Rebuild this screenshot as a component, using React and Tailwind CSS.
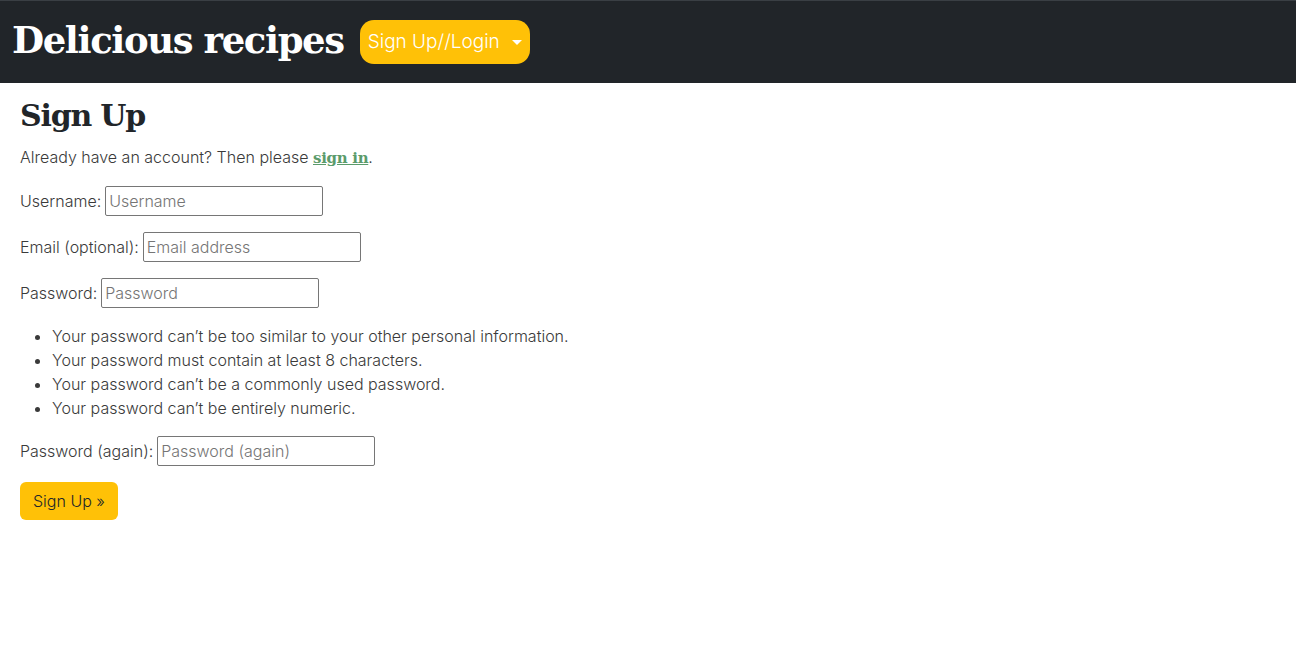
import React from 'react';

const fields = [
    { label: 'Username:', placeholder: 'Username', type: 'text' },
    { label: 'Email (optional):', placeholder: 'Email address', type: 'email' },
    { label: 'Password:', placeholder: 'Password', type: 'password' },
];

const rules = [
    'Your password can’t be too similar to your other personal information.',
    'Your password must contain at least 8 characters.',
    'Your password can’t be a commonly used password.',
    'Your password can’t be entirely numeric.',
];

const Field = ({ label, placeholder, type }) => (
    <p className="flex items-center gap-1 h-[30px]">
        <label>{label}</label>
        <input
            type={type}
            placeholder={placeholder}
            className="w-[218px] h-[30px] border border-[#767676] rounded-[2px] px-[3px] text-[16px] font-light placeholder:text-[#757575] outline-none"
        />
    </p>
);

const App = () => {
    return (
        <div className="min-h-screen bg-white text-[#3a3a3a] font-['Inter',sans-serif] font-light text-[16px]">
            <nav className="h-[83px] bg-[#212529] border-t border-[#3a3f44] flex items-center px-3 gap-4">
                <a className="text-white font-['DejaVu_Serif',serif] font-bold text-[37px] tracking-[-1.4px] leading-none -mt-1">
                    Delicious recipes
                </a>
                <button className="h-11 pl-2 pr-2 rounded-[14px] bg-[#ffc107] text-white text-[19px] font-light font-['Inter',sans-serif] flex items-center gap-3">
                    Sign Up//Login
                    <span className="w-0 h-0 border-l-[5px] border-r-[5px] border-t-[5px] border-l-transparent border-r-transparent border-t-white" />
                </button>
            </nav>
            <main className="px-5 pt-[18px]">
                <h1 className="font-['DejaVu_Serif',serif] font-bold text-[30px] leading-none tracking-[-1.2px] text-[#212529] mb-[14px]">
                    Sign Up
                </h1>
                <p className="mb-4">
                    Already have an account? Then please{' '}
                    <a href="#" className="font-['DejaVu_Serif',serif] font-bold text-[#5b9b6b] underline text-[15px] tracking-[-0.3px]">
                        sign in
                    </a>
                    .
                </p>
                <div className="flex flex-col gap-4">
                    {fields.map((f) => (
                        <Field key={f.label} {...f} />
                    ))}
                </div>
                <ul className="list-disc pl-8 mt-4 mb-4 leading-6">
                    {rules.map((r) => (
                        <li key={r}>{r}</li>
                    ))}
                </ul>
                <Field label="Password (again):" placeholder="Password (again)" type="password" />
                <button className="mt-4 h-[38px] px-[13px] rounded-md bg-[#ffc107] text-[#212529] font-light">
                    Sign Up »
                </button>
            </main>
        </div>
    );
};

export default App;
